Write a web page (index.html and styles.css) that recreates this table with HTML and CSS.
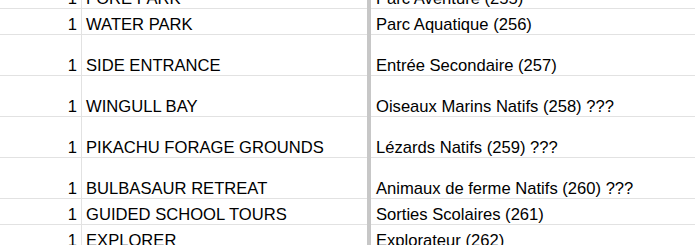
FILE: index.html
```html
<!DOCTYPE html>
<html>
<head>
<meta charset="utf-8">
<link rel="stylesheet" href="styles.css">
</head>
<body>
<div class="sheet">
  <div class="row top"><div class="c num">1</div><div class="c name">FORE PARK</div><div class="bar"></div><div class="c fr">Parc Aventure (255)</div></div>
  <div class="row short"><div class="c num">1</div><div class="c name">WATER PARK</div><div class="bar"></div><div class="c fr">Parc Aquatique (256)</div></div>
  <div class="row tall"><div class="c num">1</div><div class="c name">SIDE ENTRANCE</div><div class="bar"></div><div class="c fr">Entrée Secondaire (257)</div></div>
  <div class="row tall"><div class="c num">1</div><div class="c name">WINGULL BAY</div><div class="bar"></div><div class="c fr">Oiseaux Marins Natifs (258) ???</div></div>
  <div class="row tall"><div class="c num">1</div><div class="c name">PIKACHU FORAGE GROUNDS</div><div class="bar"></div><div class="c fr">Lézards Natifs (259) ???</div></div>
  <div class="row tall"><div class="c num">1</div><div class="c name">BULBASAUR RETREAT</div><div class="bar"></div><div class="c fr">Animaux de ferme Natifs (260) ???</div></div>
  <div class="row short"><div class="c num">1</div><div class="c name">GUIDED SCHOOL TOURS</div><div class="bar"></div><div class="c fr">Sorties Scolaires (261)</div></div>
  <div class="row short"><div class="c num">1</div><div class="c name">EXPLORER</div><div class="bar"></div><div class="c fr">Explorateur (262)</div></div>
</div>
</body>
</html>
```

FILE: styles.css
```css
html, body {
  margin: 0;
  padding: 0;
  background: #fff;
  overflow: hidden;
}
.sheet {
  width: 695px;
  height: 245px;
  overflow: hidden;
  font-family: "Liberation Sans", Arial, sans-serif;
  font-size: 16.6px;
  line-height: 19px;
  color: #000;
}
.row {
  display: flex;
  box-sizing: border-box;
}
.row.top { height: 9px; }
.row.short { height: 26px; }
.row.tall { height: 41px; }
.c {
  box-sizing: border-box;
  display: flex;
  align-items: flex-end;
  border-bottom: 1px solid #e2e2e2;
  white-space: nowrap;
}
.num {
  width: 82px;
  flex: none;
  justify-content: flex-end;
  padding-right: 4px;
  border-right: 1px solid #e2e2e2;
}
.name {
  width: 285px;
  flex: none;
  padding-left: 4px;
}
.bar {
  width: 4px;
  flex: none;
  background: #c7c7c7;
}
.fr {
  flex: 1;
  padding-left: 5px;
}
```
